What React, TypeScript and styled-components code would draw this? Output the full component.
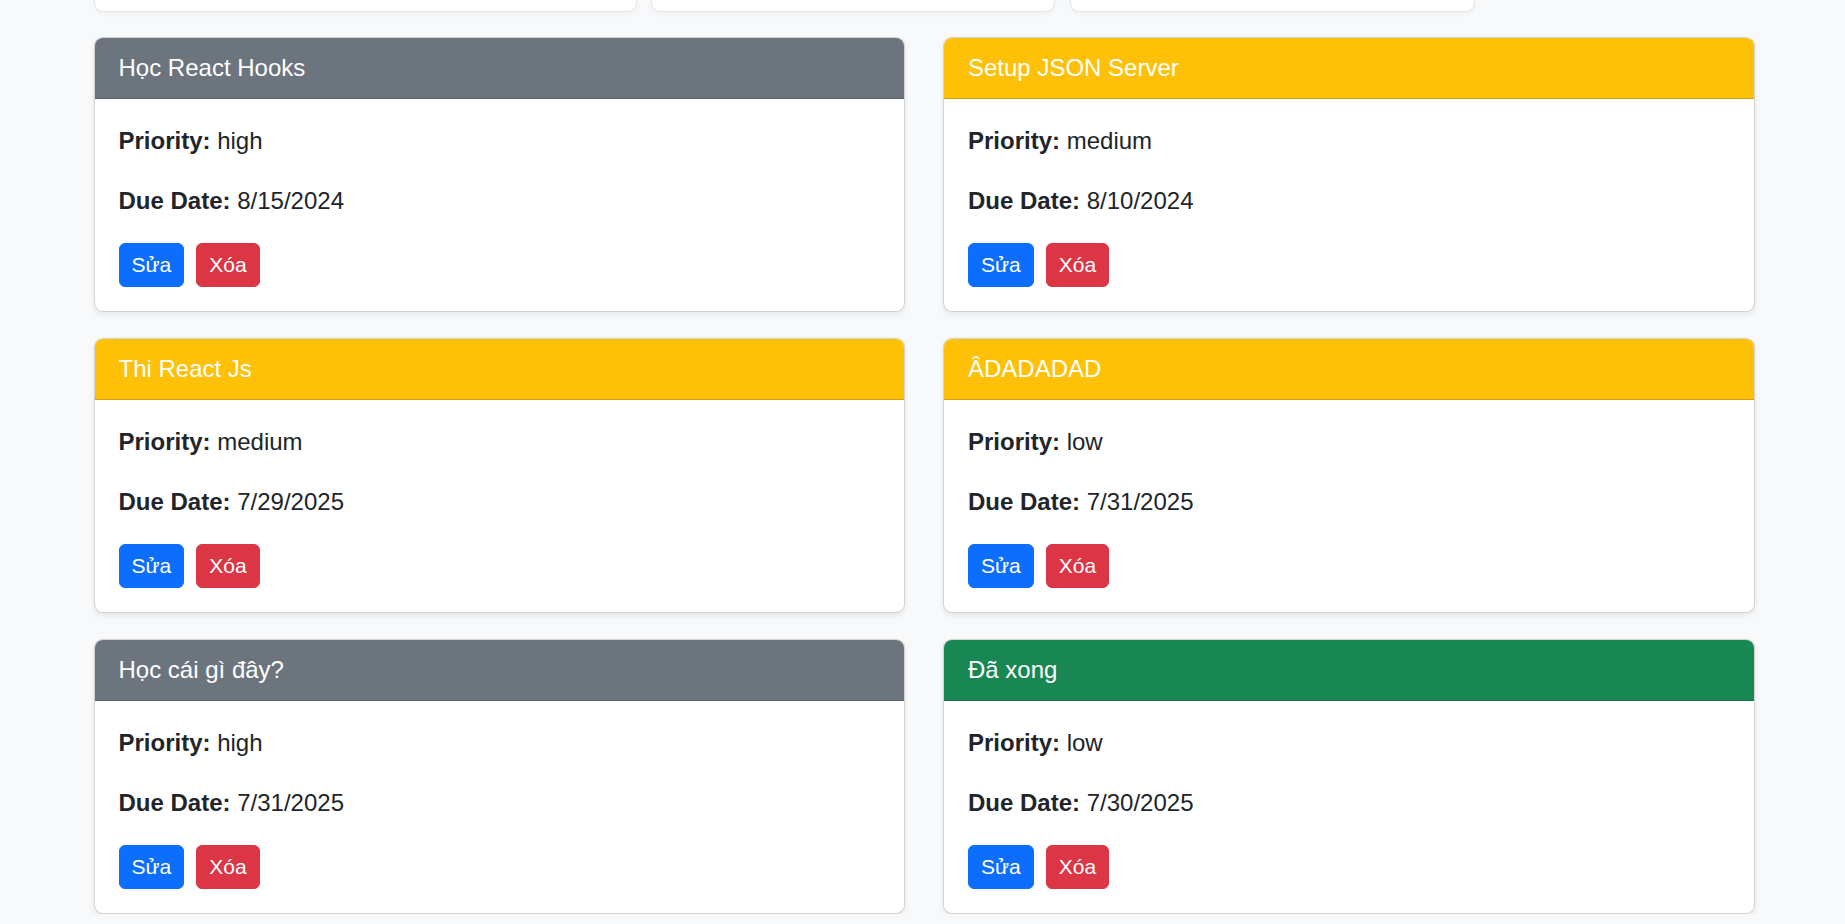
import styled, { createGlobalStyle } from "styled-components";

const GlobalStyle = createGlobalStyle`
  html, body {
    margin: 0;
    padding: 0;
    background-color: #f8f9fa;
  }
  body {
    font-family: "Liberation Sans", Arial, sans-serif;
    font-size: 24px;
    line-height: 1.5;
    color: #212529;
  }
`;

const Page = styled.div`
  padding: 0 90.5px 0 93.5px;
`;

/* the filter boxes above, scrolled mostly out of view */
const TopStrip = styled.div`
  display: flex;
  gap: 14.5px;
  height: 12px;
  margin-bottom: 25px;
`;

const TopBox = styled.div<{ $w: number }>`
  width: ${(p) => p.$w}px;
  height: 12px;
  box-sizing: border-box;
  background-color: #ffffff;
  border: 1px solid #e3e5e8;
  border-top: none;
  border-radius: 0 0 9px 9px;
  box-shadow: 0 2px 4px rgba(0, 0, 0, 0.04);
`;

const Grid = styled.div`
  display: grid;
  grid-template-columns: 1fr 1fr;
  column-gap: 38px;
  row-gap: 26px;
`;

const Card = styled.div`
  background-color: #ffffff;
  border: 1px solid rgba(0, 0, 0, 0.175);
  border-radius: 9px;
  box-shadow: 0 3px 6px rgba(0, 0, 0, 0.075);
  overflow: hidden;
`;

const CardHeader = styled.div<{ $bg: string }>`
  background-color: ${(p) => p.$bg};
  color: #ffffff;
  padding: 12px 24px;
  line-height: 36px;
  border-bottom: 1px solid rgba(0, 0, 0, 0.175);
`;

const CardBody = styled.div`
  padding: 24px;
`;

const Line = styled.p`
  margin: 0 0 24px 0;
  line-height: 36px;
`;

const Label = styled.strong`
  font-weight: bold;
`;

const Actions = styled.div`
  display: flex;
  gap: 12px;
`;

const Button = styled.button<{ $bg: string }>`
  font-family: "Liberation Sans", Arial, sans-serif;
  font-size: 21px;
  line-height: 32px;
  padding: 5px 12px;
  color: #ffffff;
  background-color: ${(p) => p.$bg};
  border: 1px solid ${(p) => p.$bg};
  border-radius: 6px;
  cursor: pointer;
`;

const colors = {
  secondary: "#6c757d",
  warning: "#ffc107",
  success: "#198754",
};

type Todo = {
  title: string;
  status: keyof typeof colors;
  priority: string;
  due: string;
};

const todos: Todo[] = [
  { title: "Học React Hooks", status: "secondary", priority: "high", due: "8/15/2024" },
  { title: "Setup JSON Server", status: "warning", priority: "medium", due: "8/10/2024" },
  { title: "Thi React Js", status: "warning", priority: "medium", due: "7/29/2025" },
  { title: "ÂDADADAD", status: "warning", priority: "low", due: "7/31/2025" },
  { title: "Học cái gì đây?", status: "secondary", priority: "high", due: "7/31/2025" },
  { title: "Đã xong", status: "success", priority: "low", due: "7/30/2025" },
];

export default function App() {
  return (
    <Page>
      <GlobalStyle />
      <TopStrip>
        <TopBox $w={543} />
        <TopBox $w={404} />
        <TopBox $w={405} />
      </TopStrip>
      <Grid>
        {todos.map((t) => (
          <Card key={t.title}>
            <CardHeader $bg={colors[t.status]}>{t.title}</CardHeader>
            <CardBody>
              <Line>
                <Label>Priority:</Label> {t.priority}
              </Line>
              <Line>
                <Label>Due Date:</Label> {t.due}
              </Line>
              <Actions>
                <Button $bg="#0d6efd">Sửa</Button>
                <Button $bg="#dc3545">Xóa</Button>
              </Actions>
            </CardBody>
          </Card>
        ))}
      </Grid>
    </Page>
  );
}
